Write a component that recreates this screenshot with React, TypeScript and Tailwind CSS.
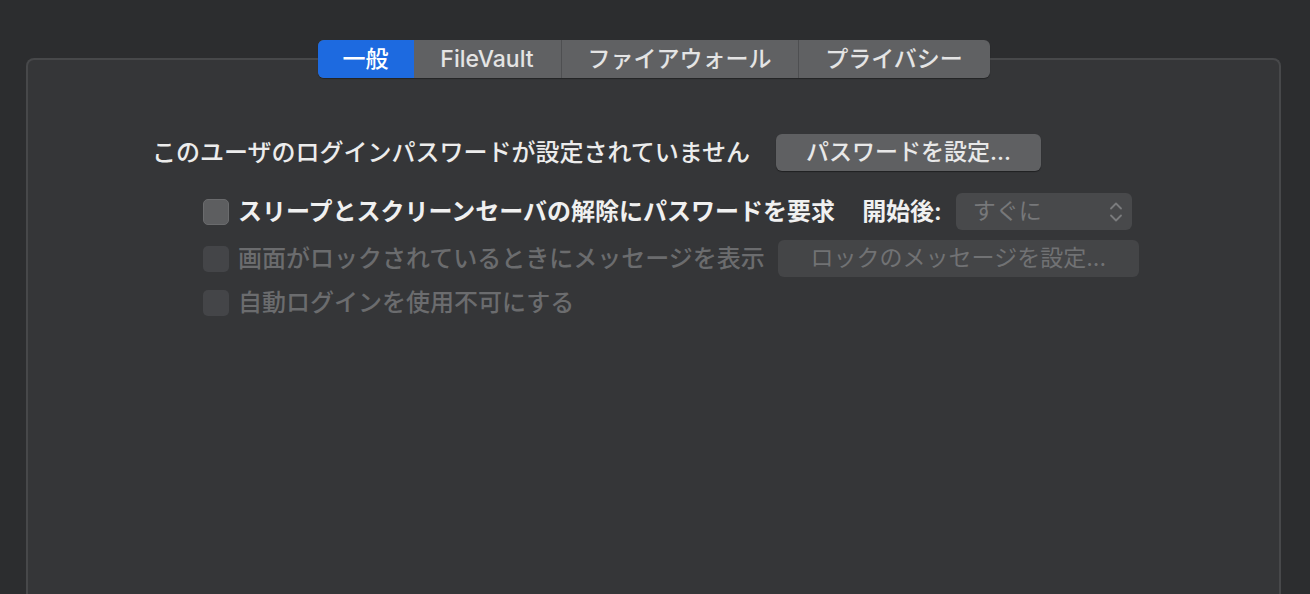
import { ChevronDown, ChevronUp } from "lucide-react";

const tabs = [
  { label: "一般", width: "w-[96px]", active: true },
  { label: "FileVault", width: "w-[147px]", active: false },
  { label: "ファイアウォール", width: "w-[237px]", active: false },
  { label: "プライバシー", width: "w-[192px]", active: false },
];

function Checkbox({ disabled }: { disabled?: boolean }) {
  return (
    <div
      className={
        disabled
          ? "w-[26px] h-[26px] rounded-[5px] bg-[#444548] shrink-0"
          : "w-[26px] h-[26px] rounded-[5px] bg-[#5d5e60] border border-[#6a6b6d] shrink-0"
      }
    />
  );
}

export default function App() {
  return (
    <div
      className="h-[594px] w-[1310px] overflow-hidden bg-[#2c2d2f] pt-[58px] pl-[26px]"
      style={{ fontFamily: '"Inter", "Noto Sans CJK JP", sans-serif' }}
    >
      <div className="w-[1255px] h-[600px] rounded-t-[8px] border-2 border-b-0 border-[#47484a] bg-[#353638] flex flex-col">
        {/* tabs */}
        <div className="flex justify-center -mt-[20px]">
          <div className="flex h-[38px] rounded-[6px] overflow-hidden bg-[#606163] shadow-[0_1px_1px_rgba(0,0,0,0.35)]">
            {tabs.map((tab, i) => (
              <div
                key={tab.label}
                className={`${tab.width} flex items-center justify-center text-[23px] font-medium ${
                  tab.active
                    ? "bg-[#1d6ae0] text-white"
                    : "text-[#e4e4e4]"
                } ${i > 1 ? "border-l border-[#4e4f51]" : ""}`}
              >
                {tab.label}
              </div>
            ))}
          </div>
        </div>

        <div className="pl-[124px] pt-[56px] flex flex-col">
          {/* row 1 */}
          <div className="flex items-center h-[37px] gap-[26px]">
            <span className="text-[24px] text-[#ececec] font-medium leading-none">
              このユーザのログインパスワードが設定されていません
            </span>
            <div className="w-[265px] h-[37px] rounded-[6px] bg-[#5f6062] shadow-[0_1px_1px_rgba(0,0,0,0.4)] flex items-center justify-center text-[23px] text-[#e8e8e8] font-medium">
              パスワードを設定...
            </div>
          </div>

          {/* row 2 */}
          <div className="flex items-center h-[37px] mt-[22px] pl-[51px]">
            <Checkbox />
            <span className="ml-[9px] text-[24px] text-[#f0f0f0] font-semibold leading-none">
              スリープとスクリーンセーバの解除にパスワードを要求
            </span>
            <span className="ml-[27px] text-[24px] text-[#f0f0f0] font-semibold leading-none">
              開始後:
            </span>
            <div className="ml-[14px] w-[176px] h-[37px] rounded-[6px] bg-[#48494b] flex items-center justify-between pl-[17px] pr-[6px]">
              <span className="text-[23px] text-[#77787a] leading-none">すぐに</span>
              <div className="flex flex-col items-center text-[#7a7b7d] -space-y-[8px]">
                <ChevronUp size={20} strokeWidth={2.2} />
                <ChevronDown size={20} strokeWidth={2.2} />
              </div>
            </div>
          </div>

          {/* row 3 */}
          <div className="flex items-center h-[37px] mt-[10px] pl-[51px]">
            <Checkbox disabled />
            <span className="ml-[9px] text-[24px] text-[#6b6c6e] font-medium leading-none">
              画面がロックされているときにメッセージを表示
            </span>
            <div className="ml-[13px] w-[361px] h-[37px] rounded-[6px] bg-[#444547] flex items-center justify-center text-[23px] text-[#717274]">
              ロックのメッセージを設定...
            </div>
          </div>

          {/* row 4 */}
          <div className="flex items-center h-[28px] mt-[12px] pl-[51px]">
            <Checkbox disabled />
            <span className="ml-[9px] text-[24px] text-[#6b6c6e] font-medium leading-none">
              自動ログインを使用不可にする
            </span>
          </div>
        </div>
      </div>
    </div>
  );
}
